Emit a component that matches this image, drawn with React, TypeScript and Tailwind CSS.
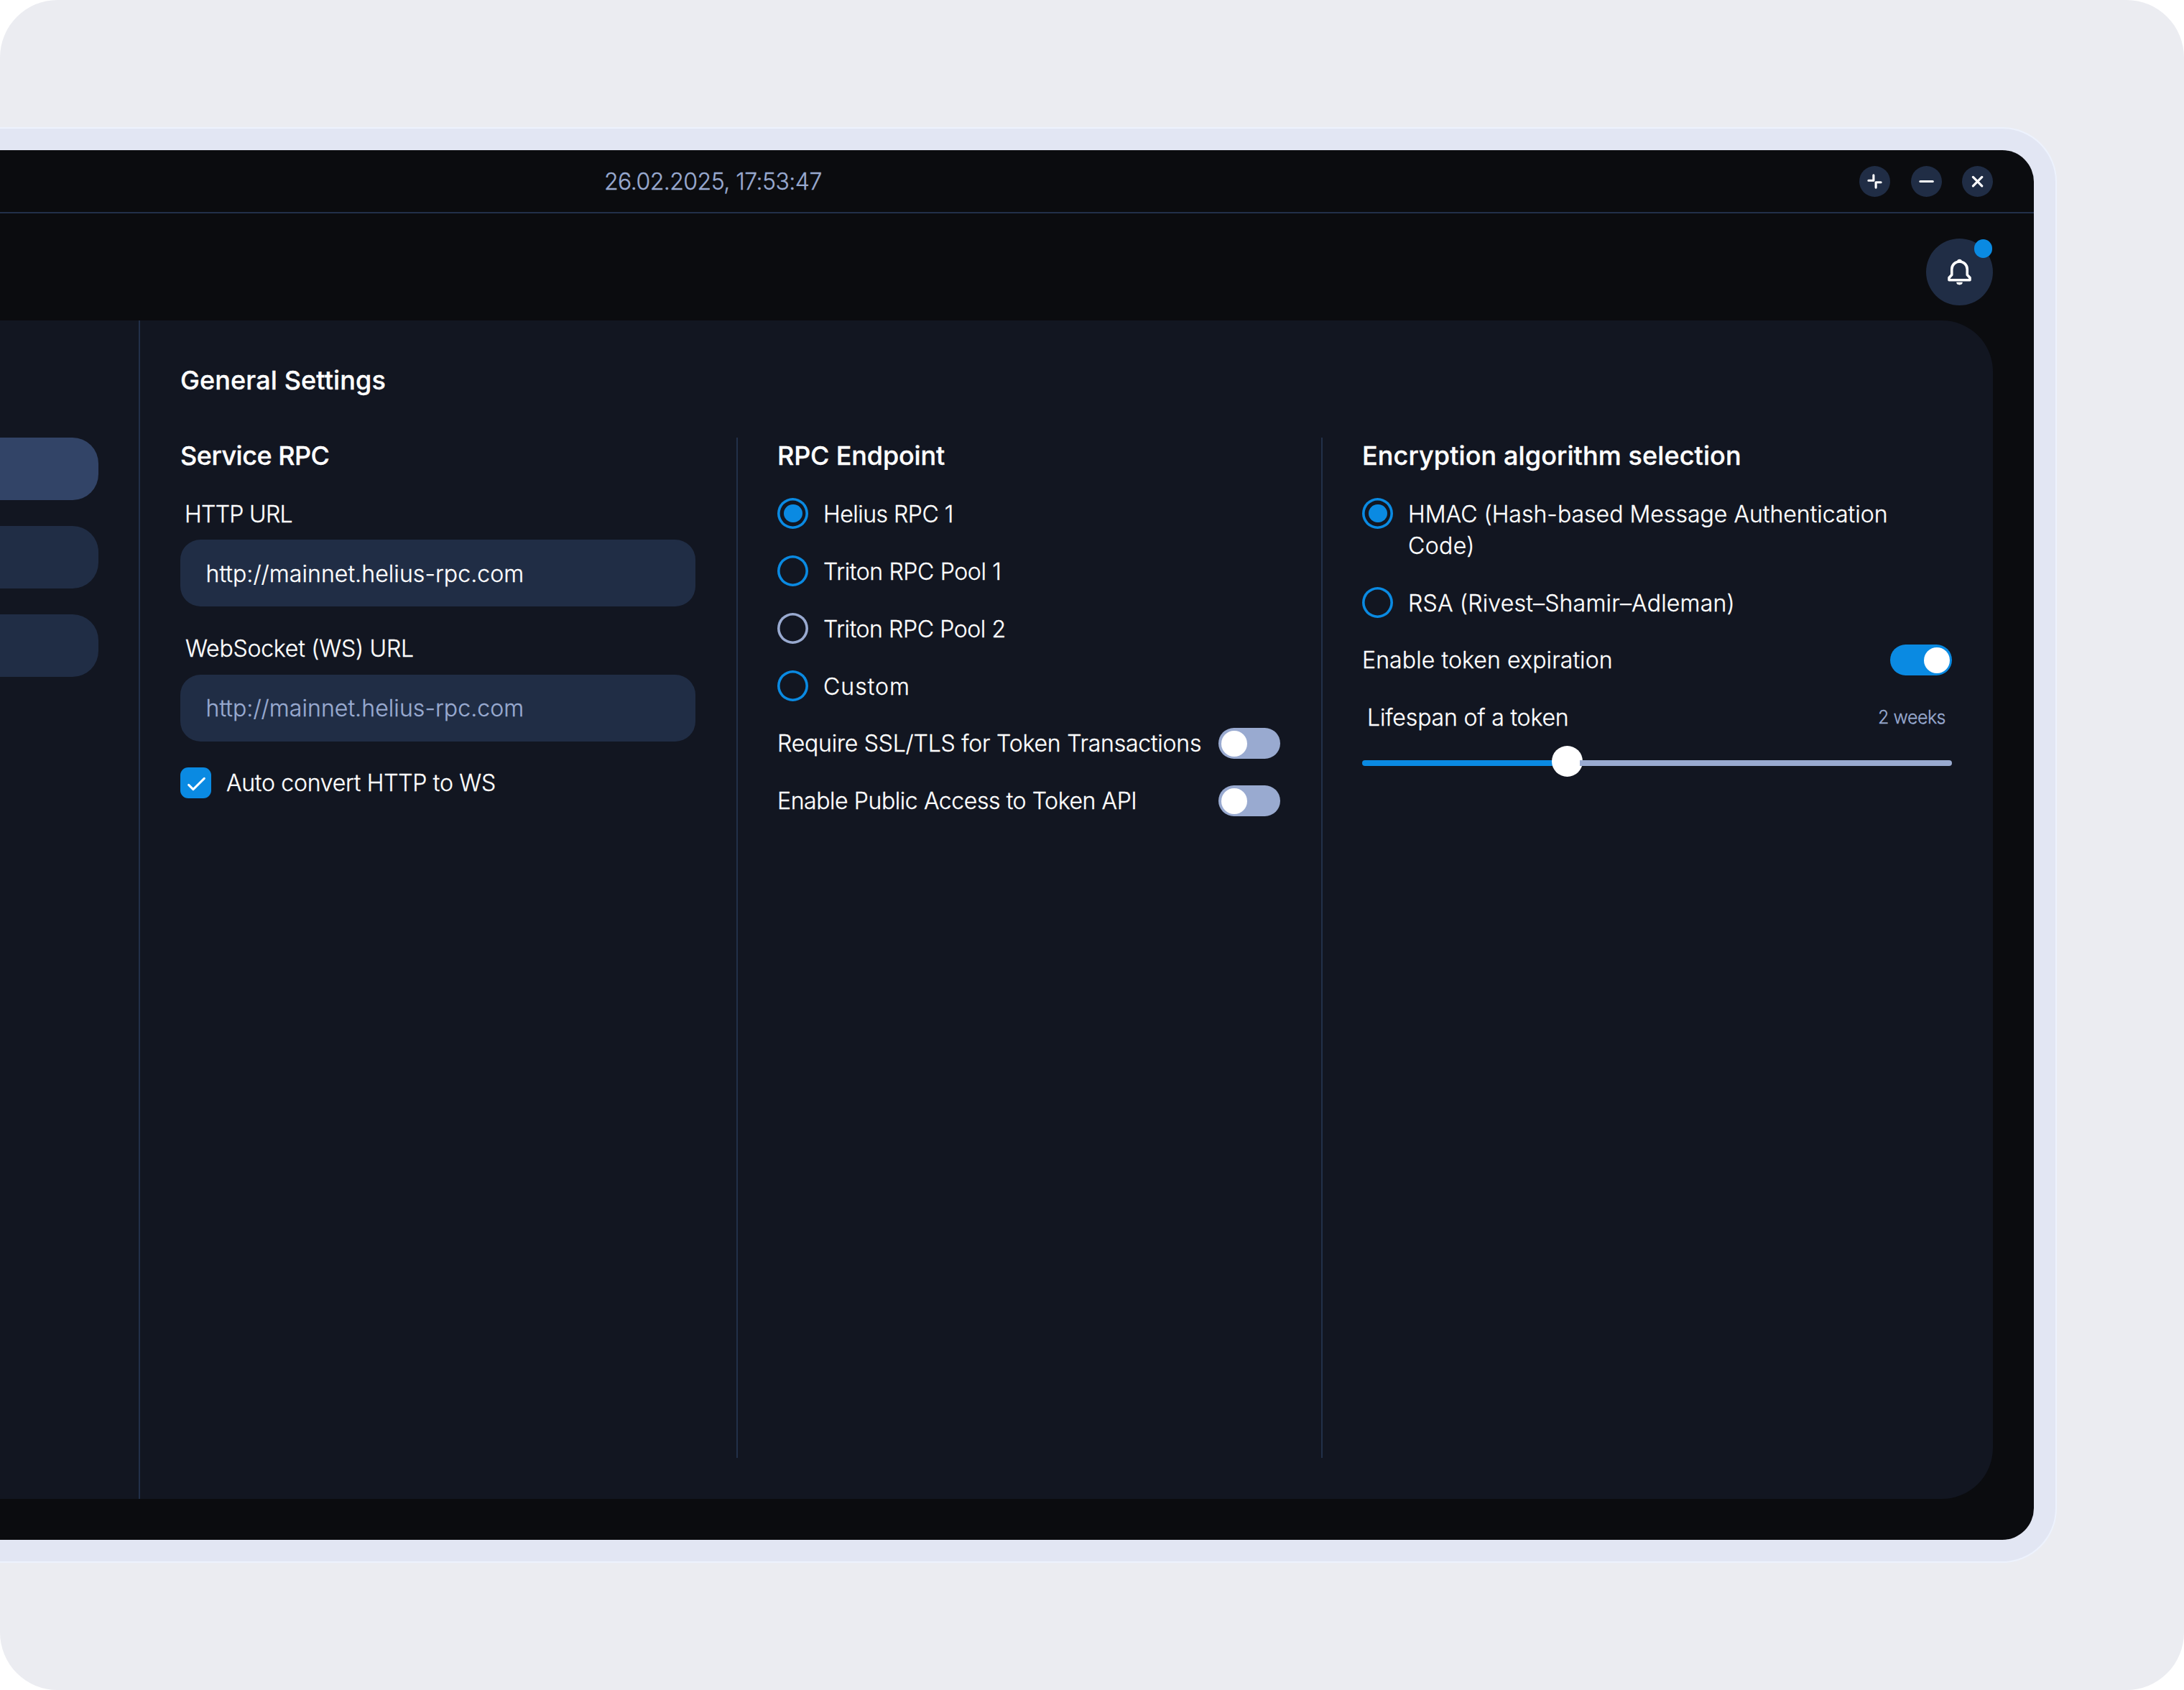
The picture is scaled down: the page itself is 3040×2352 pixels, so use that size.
import { useState, type ReactNode } from "react"
import clsx from "clsx"

type RadioOptionProps = {
  checked: boolean
  onSelect: () => void
  muted?: boolean
  className?: string
  children: ReactNode
}

function RadioOption({
  checked,
  onSelect,
  muted = false,
  className,
  children,
}: RadioOptionProps) {
  return (
    <button
      aria-checked={checked}
      className={clsx("flex items-start gap-[21px] text-left", className)}
      role="radio"
      type="button"
      onClick={onSelect}
    >
      <span
        className={clsx(
          "flex size-[43px] shrink-0 items-center justify-center rounded-full inset-ring-[3.6px]",
          muted ? "inset-ring-[#99aad0]" : "inset-ring-[#0a8ae2]",
        )}
      >
        {checked ? (
          <span className="ml-px size-[25.6px] rounded-full bg-[#0a8ae2]" />
        ) : null}
      </span>
      <span className="mt-[0.5px] leading-[44px] whitespace-nowrap">
        {children}
      </span>
    </button>
  )
}

function Toggle({ on, onToggle }: { on: boolean; onToggle: () => void }) {
  return (
    <button
      aria-checked={on}
      className={clsx(
        "flex h-[43px] w-[86px] shrink-0 items-center rounded-full px-[3.5px]",
        on ? "justify-end bg-[#0a8ae2]" : "justify-start bg-[#99aad0]",
      )}
      role="switch"
      type="button"
      onClick={onToggle}
    >
      <span className="size-9 rounded-full bg-white" />
    </button>
  )
}

function WindowButton({ d }: { d: string }) {
  return (
    <button className="size-[43px] rounded-full bg-[#202d45]" type="button">
      <svg
        className="size-[43px]"
        fill="none"
        stroke="white"
        strokeLinecap="round"
        strokeLinejoin="round"
        strokeWidth="1.75"
        viewBox="0 0 24 24"
      >
        <path d={d} />
      </svg>
    </button>
  )
}

function BellIcon() {
  return (
    <svg className="size-[43px]" fill="none" viewBox="0 0 24 24">
      <path
        d="M6 9.9a6 6 0 0 1 12 0v4.3l2.1 2.3v1.8H3.9v-1.8L6 14.2Z"
        stroke="white"
        strokeLinejoin="round"
        strokeWidth="2"
      />
      <ellipse cx="12" cy="3.5" fill="white" rx="1.8" ry="1.4" />
      <path d="M9.6 20h4.8a2.4 2 0 0 1-4.8 0Z" fill="white" />
    </svg>
  )
}

function TitleBar() {
  return (
    <div className="flex h-[88px] items-center justify-between border-b-2 border-[#223049] pr-[57px] pl-[841px]">
      <span className="mt-[2px] text-[32px] tracking-[-0.54px] text-[#99aad0]">
        26.02.2025, 17:53:47
      </span>
      <div className="flex gap-[28.5px]">
        <WindowButton d="M11.1 7.2v4.1H7.2M12.9 16.8v-4.1h3.9" />
        <WindowButton d="M7.2 12h9.7" />
        <WindowButton d="m8.6 8.6 6.9 6.9M15.5 8.6l-6.9 6.9" />
      </div>
    </div>
  )
}

function ColumnHeading({
  className,
  children,
}: {
  className: string
  children: ReactNode
}) {
  return (
    <h3
      className={clsx(
        "mb-[33px] text-4xl leading-[51px] font-medium whitespace-nowrap",
        className,
      )}
    >
      {children}
    </h3>
  )
}

function ServiceRpc() {
  const [autoConvert, setAutoConvert] = useState(true)

  return (
    <section className="w-[776px] border-r-2 border-[#223049] pr-[57px]">
      <ColumnHeading className="tracking-[-0.5px]">Service RPC</ColumnHeading>
      <div className="flex flex-col gap-[36.5px]">
        <label className="block">
          <span className="block pt-px pl-[6px] leading-[43px] tracking-[-0.69px]">
            HTTP URL
          </span>
          <input
            className="mt-[14px] block h-[93px] w-full rounded-[28px] bg-[#202d45] px-[35.5px] pt-px tracking-[0.08px] outline-none"
            defaultValue="http://mainnet.helius-rpc.com"
          />
        </label>
        <label className="block">
          <span className="block pl-[7px] leading-[44px] tracking-[-0.22px]">
            WebSocket (WS) URL
          </span>
          <input
            className="mt-[14px] block h-[93px] w-full rounded-[28px] bg-[#202d45] px-[35.5px] tracking-[0.08px] outline-none placeholder:text-[#99aad0]"
            placeholder="http://mainnet.helius-rpc.com"
          />
        </label>
        <button
          aria-checked={autoConvert}
          className="flex h-[43px] items-center gap-[21px] tracking-[-0.26px]"
          role="checkbox"
          type="button"
          onClick={() => setAutoConvert(!autoConvert)}
        >
          <span className="size-[43px] rounded-[11px] bg-[#0a8ae2]">
            {autoConvert ? (
              <svg
                className="size-[43px]"
                fill="none"
                stroke="white"
                strokeLinecap="round"
                strokeLinejoin="round"
                strokeWidth="1.7"
                viewBox="0 0 24 24"
              >
                <path d="m6.5 13.6 3.5 3.5 8.6-8.5" />
              </svg>
            ) : null}
          </span>
          Auto convert HTTP to WS
        </button>
      </div>
    </section>
  )
}

const endpoints = [
  { name: "Helius RPC 1", className: "tracking-[-0.5px]" },
  { name: "Triton RPC Pool 1", className: "tracking-[-0.36px]" },
  { name: "Triton RPC Pool 2", className: "tracking-[-0.4px]", muted: true },
  { name: "Custom", className: "tracking-[1px]" },
]

function RpcEndpoint() {
  const [endpoint, setEndpoint] = useState("Helius RPC 1")
  const [requireSsl, setRequireSsl] = useState(false)
  const [publicAccess, setPublicAccess] = useState(false)

  return (
    <section className="w-[814px] border-r-2 border-[#223049] pr-[57px] pl-[55px]">
      <ColumnHeading className="tracking-[-0.16px]">RPC Endpoint</ColumnHeading>
      <div className="flex flex-col gap-[37px]">
        {endpoints.map((item) => (
          <RadioOption
            key={item.name}
            checked={endpoint === item.name}
            className={clsx("h-[43px]", item.className)}
            muted={item.muted}
            onSelect={() => setEndpoint(item.name)}
          >
            {item.name}
          </RadioOption>
        ))}
        <div className="flex h-[43px] items-center justify-between tracking-[-0.22px] whitespace-nowrap">
          Require SSL/TLS for Token Transactions
          <Toggle on={requireSsl} onToggle={() => setRequireSsl(!requireSsl)} />
        </div>
        <div className="flex h-[43px] items-center justify-between tracking-[-0.42px] whitespace-nowrap">
          Enable Public Access to Token API
          <Toggle
            on={publicAccess}
            onToggle={() => setPublicAccess(!publicAccess)}
          />
        </div>
      </div>
    </section>
  )
}

function Encryption() {
  const [algorithm, setAlgorithm] = useState("hmac")
  const [expires, setExpires] = useState(true)

  return (
    <section className="flex-1 pl-[55px]">
      <ColumnHeading className="tracking-[0.1px]">
        Encryption algorithm selection
      </ColumnHeading>
      <div className="flex flex-col gap-[37px]">
        <RadioOption
          checked={algorithm === "hmac"}
          className="h-[87px] tracking-[0.02px]"
          onSelect={() => setAlgorithm("hmac")}
        >
          HMAC (Hash-based Message Authentication
          <br />
          <span className="tracking-[0.4px]">Code)</span>
        </RadioOption>
        <RadioOption
          checked={algorithm === "rsa"}
          className="h-[43px] tracking-[0.2px]"
          onSelect={() => setAlgorithm("rsa")}
        >
          RSA (Rivest–Shamir–Adleman)
        </RadioOption>
        <div className="flex h-[43px] items-center justify-between tracking-[0.12px]">
          Enable token expiration
          <Toggle on={expires} onToggle={() => setExpires(!expires)} />
        </div>
        <div>
          <div className="flex h-11 items-center justify-between pr-[9px] pl-[7px] tracking-[-0.14px]">
            Lifespan of a token
            <span className="text-[25px] tracking-[-0.5px] text-[#99aad0]">
              2 weeks
            </span>
          </div>
          <div className="mt-[17px] flex h-[43px] items-center">
            <span className="mt-1 h-2 w-[268px] rounded-l-full bg-[#0a8ae2]" />
            <span className="-mx-1 size-[43px] shrink-0 rounded-full bg-white" />
            <span className="mt-1 h-2 flex-1 rounded-r-full bg-[#99aad0]" />
          </div>
        </div>
      </div>
    </section>
  )
}

export default function App() {
  return (
    <div className="bg-white">
      <div className="h-[2352px] w-[3040px] overflow-hidden rounded-[80px] bg-[#ebecf1] pt-[177px] font-['Inter',sans-serif] text-[32px] font-light text-white [-webkit-text-stroke:0.3px]">
        <div className="h-[1998px] w-[2863px] rounded-r-[76px] border-y-2 border-r-2 border-[#edf2fd] bg-[#e2e6f3] py-[30px] pr-[30px]">
          <div className="flex h-[1934px] flex-col overflow-hidden rounded-r-[44px] bg-[#0b0c0f]">
            <TitleBar />
            <header className="flex h-[149px] shrink-0 items-start justify-end pt-[34.5px] pr-[57px]">
              <button
                className="relative flex size-[93px] items-center justify-center rounded-full bg-[#202d45]"
                type="button"
              >
                <BellIcon />
                <span className="absolute top-[1.5px] right-px size-[25.5px] rounded-full bg-[#0a8ae2]" />
              </button>
            </header>
            <main className="mr-[57px] flex h-[1640px] rounded-r-[71px] bg-[#121621]">
              <nav className="flex w-[195px] flex-col gap-9 border-r-2 border-[#223049] pt-[163px] pr-14">
                <span className="h-[87px] rounded-r-[36px] bg-[#324467]" />
                <span className="h-[87px] rounded-r-[36px] bg-[#202d45]" />
                <span className="h-[87px] rounded-r-[36px] bg-[#202d45]" />
              </nav>
              <div className="flex flex-1 flex-col pt-[58px] pr-[57px] pb-[57px] pl-14">
                <h2 className="mb-[54px] text-4xl leading-[51px] font-medium tracking-[0.12px]">
                  General Settings
                </h2>
                <div className="flex flex-1">
                  <ServiceRpc />
                  <RpcEndpoint />
                  <Encryption />
                </div>
              </div>
            </main>
          </div>
        </div>
      </div>
    </div>
  )
}
